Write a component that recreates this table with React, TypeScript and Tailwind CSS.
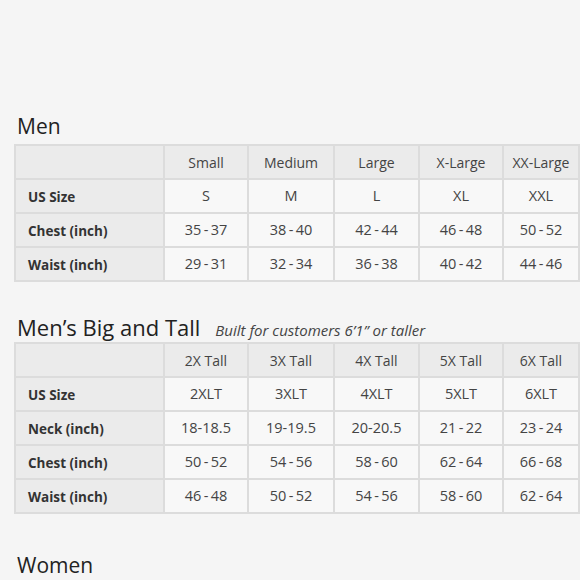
const cols = [149, 84, 86, 85, 84, 76]

const men = {
  head: ['Small', 'Medium', 'Large', 'X-Large', 'XX-Large'],
  rows: [
    ['US Size', 'S', 'M', 'L', 'XL', 'XXL'],
    ['Chest (inch)', '35-37', '38-40', '42-44', '46-48', '50-52'],
    ['Waist (inch)', '29-31', '32-34', '36-38', '40-42', '44-46'],
  ],
}

const bigTall = {
  head: ['2X Tall', '3X Tall', '4X Tall', '5X Tall', '6X Tall'],
  rows: [
    ['US Size', '2XLT', '3XLT', '4XLT', '5XLT', '6XLT'],
    ['Neck (inch)', '18-18.5', '19-19.5', '20-20.5', '21-22', '23-24'],
    ['Chest (inch)', '50-52', '54-56', '58-60', '62-64', '66-68'],
    ['Waist (inch)', '46-48', '50-52', '54-56', '58-60', '62-64'],
  ],
}

function fmt(v: string) {
  // the chart spaces the hyphen in plain ranges
  return /^\d+-\d+$/.test(v) ? v.replace('-', '\u2009-\u2009') : v
}

function SizeTable({ head, rows }: { head: string[]; rows: string[][] }) {
  return (
    <table className="table-fixed border-collapse border-2 border-[#dcdcdc]" style={{ width: cols.reduce((a, b) => a + b, 0) }}>
      <colgroup>
        {cols.map((w, i) => (
          <col key={i} style={{ width: w }} />
        ))}
      </colgroup>
      <tbody>
        <tr className="h-[34px]">
          <td className="border-2 border-[#dcdcdc] bg-[#ebebeb]" />
          {head.map(h => (
            <td key={h} className="border-2 border-[#dcdcdc] bg-[#ebebeb] text-center text-[14px] text-[#444]">
              {h}
            </td>
          ))}
        </tr>
        {rows.map(r => (
          <tr key={r[0]} className="h-[34px]">
            <td className="border-2 border-[#dcdcdc] bg-[#ebebeb] pl-[12px] pt-[2px] text-[13.5px] font-bold text-[#333]">
              {r[0]}
            </td>
            {r.slice(1).map((c, i) => (
              <td key={i} className="border-2 border-[#dcdcdc] bg-[#f8f8f8] text-center text-[14.5px] text-[#444] whitespace-pre">
                {fmt(c)}
              </td>
            ))}
          </tr>
        ))}
      </tbody>
    </table>
  )
}

export default function App() {
  return (
    <div className="w-[580px] h-[580px] overflow-hidden bg-[#f5f5f5] pl-[14px] pt-[111px]" style={{ fontFamily: '"Open Sans", "Noto Sans", sans-serif' }}>
      <h2 className="ml-[3px] text-[21px] leading-[30px] text-[#222] mb-[3px]">Men</h2>
      <SizeTable {...men} />

      <div className="mt-[30px] ml-[3px] flex items-baseline gap-[15px]">
        <h2 className="text-[22px] leading-[30px] text-[#222]">Men’s Big and Tall</h2>
        <span className="text-[15px] italic text-[#444]">Built for customers 6’1” or taller</span>
      </div>
      <SizeTable {...bigTall} />

      <h2 className="mt-[36px] ml-[3px] text-[21px] leading-[30px] text-[#222] mb-[4px]">Women</h2>
      <div className="border-t-2 border-[#dcdcdc] w-[566px] h-[20px]" />
    </div>
  )
}
